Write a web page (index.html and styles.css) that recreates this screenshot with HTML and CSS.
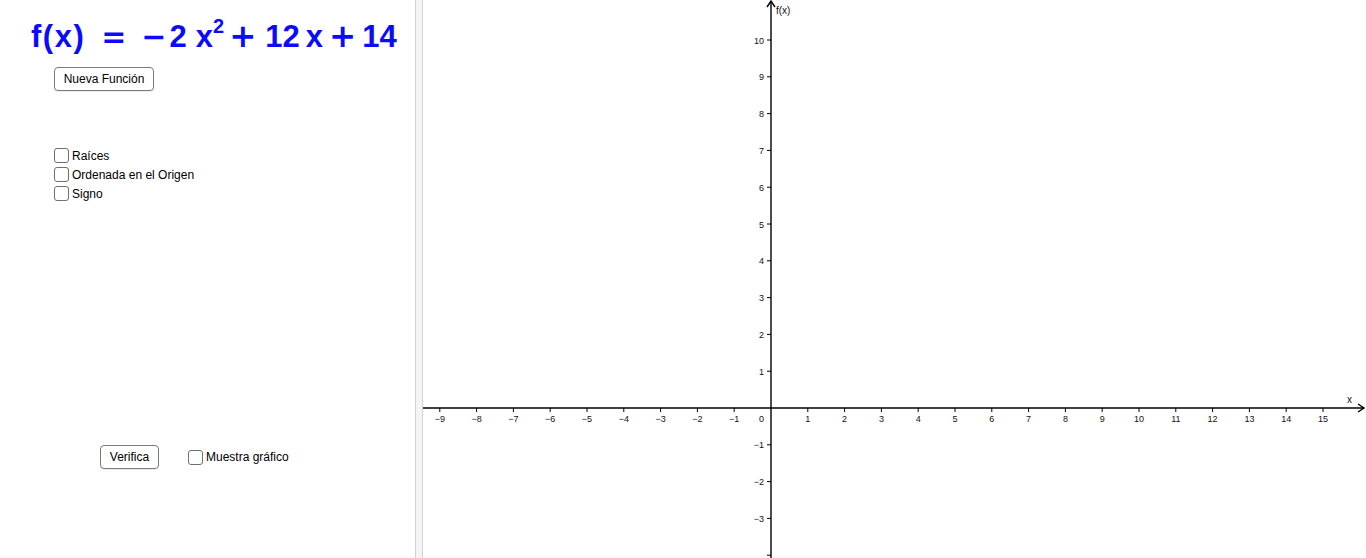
FILE: index.html
```html
<!DOCTYPE html>
<html lang="es">
<head>
<meta charset="utf-8">
<title>Función cuadrática</title>
<link rel="stylesheet" href="styles.css">
</head>
<body>
<div class="app">
  <div class="panel">
    <div class="formula">
      <span class="t t-fx">f(x)</span>
      <span class="t op t-eq">=</span>
      <span class="t op t-minus">−</span>
      <span class="t t-2">2</span>
      <span class="t t-x1">x<sup class="sup">2</sup></span>
      <span class="t op plus t-plus1">+</span>
      <span class="t t-12">12</span>
      <span class="t t-x2">x</span>
      <span class="t op plus t-plus2">+</span>
      <span class="t t-14">14</span>
    </div>
    <button class="btn btn-nueva">Nueva Función</button>
    <div class="checks">
      <label class="check"><span class="box"></span>Raíces</label>
      <label class="check"><span class="box"></span>Ordenada en el Origen</label>
      <label class="check"><span class="box"></span>Signo</label>
    </div>
    <div class="verify-row">
      <button class="btn btn-verifica">Verifica</button>
      <label class="check"><span class="box"></span>Muestra gráfico</label>
    </div>
  </div>
  <div class="divider"></div>
  <div class="graph">
    <svg class="plane" width="943" height="558" viewBox="0 0 943 558" xmlns="http://www.w3.org/2000/svg">
      <g class="axes" stroke="#000" stroke-width="1.4" fill="none">
        <line x1="0" y1="408" x2="941" y2="408"/>
        <polyline points="935,404 941,408 935,412"/>
        <line x1="348" y1="558" x2="348" y2="1"/>
        <polyline points="344,7 348,1 352,7"/>
      </g>
      <g class="ticks" stroke="#000" stroke-width="1">
        <line x1="16.8" y1="408" x2="16.8" y2="412"/>
        <line x1="53.6" y1="408" x2="53.6" y2="412"/>
        <line x1="90.4" y1="408" x2="90.4" y2="412"/>
        <line x1="127.2" y1="408" x2="127.2" y2="412"/>
        <line x1="164" y1="408" x2="164" y2="412"/>
        <line x1="200.8" y1="408" x2="200.8" y2="412"/>
        <line x1="237.6" y1="408" x2="237.6" y2="412"/>
        <line x1="274.4" y1="408" x2="274.4" y2="412"/>
        <line x1="311.2" y1="408" x2="311.2" y2="412"/>
        <line x1="384.8" y1="408" x2="384.8" y2="412"/>
        <line x1="421.6" y1="408" x2="421.6" y2="412"/>
        <line x1="458.4" y1="408" x2="458.4" y2="412"/>
        <line x1="495.2" y1="408" x2="495.2" y2="412"/>
        <line x1="532" y1="408" x2="532" y2="412"/>
        <line x1="568.8" y1="408" x2="568.8" y2="412"/>
        <line x1="605.6" y1="408" x2="605.6" y2="412"/>
        <line x1="642.4" y1="408" x2="642.4" y2="412"/>
        <line x1="679.2" y1="408" x2="679.2" y2="412"/>
        <line x1="716" y1="408" x2="716" y2="412"/>
        <line x1="752.8" y1="408" x2="752.8" y2="412"/>
        <line x1="789.6" y1="408" x2="789.6" y2="412"/>
        <line x1="826.4" y1="408" x2="826.4" y2="412"/>
        <line x1="863.2" y1="408" x2="863.2" y2="412"/>
        <line x1="900" y1="408" x2="900" y2="412"/>
        <line x1="344" y1="40" x2="348" y2="40"/>
        <line x1="344" y1="76.8" x2="348" y2="76.8"/>
        <line x1="344" y1="113.6" x2="348" y2="113.6"/>
        <line x1="344" y1="150.4" x2="348" y2="150.4"/>
        <line x1="344" y1="187.2" x2="348" y2="187.2"/>
        <line x1="344" y1="224" x2="348" y2="224"/>
        <line x1="344" y1="260.8" x2="348" y2="260.8"/>
        <line x1="344" y1="297.6" x2="348" y2="297.6"/>
        <line x1="344" y1="334.4" x2="348" y2="334.4"/>
        <line x1="344" y1="371.2" x2="348" y2="371.2"/>
        <line x1="344" y1="444.8" x2="348" y2="444.8"/>
        <line x1="344" y1="481.6" x2="348" y2="481.6"/>
        <line x1="344" y1="518.4" x2="348" y2="518.4"/>
        <line x1="344" y1="555.2" x2="348" y2="555.2"/>
      </g>
      <g class="xlabels" text-anchor="middle">
        <text x="16.8" y="422">−9</text>
        <text x="53.6" y="422">−8</text>
        <text x="90.4" y="422">−7</text>
        <text x="127.2" y="422">−6</text>
        <text x="164" y="422">−5</text>
        <text x="200.8" y="422">−4</text>
        <text x="237.6" y="422">−3</text>
        <text x="274.4" y="422">−2</text>
        <text x="311.2" y="422">−1</text>
        <text x="384.8" y="422">1</text>
        <text x="421.6" y="422">2</text>
        <text x="458.4" y="422">3</text>
        <text x="495.2" y="422">4</text>
        <text x="532" y="422">5</text>
        <text x="568.8" y="422">6</text>
        <text x="605.6" y="422">7</text>
        <text x="642.4" y="422">8</text>
        <text x="679.2" y="422">9</text>
        <text x="716" y="422">10</text>
        <text x="752.8" y="422">11</text>
        <text x="789.6" y="422">12</text>
        <text x="826.4" y="422">13</text>
        <text x="863.2" y="422">14</text>
        <text x="900" y="422">15</text>
      </g>
      <g class="ylabels" text-anchor="end">
        <text x="341" y="422">0</text>
        <text x="341" y="43.5">10</text>
        <text x="341" y="80.3">9</text>
        <text x="341" y="117.1">8</text>
        <text x="341" y="153.9">7</text>
        <text x="341" y="190.7">6</text>
        <text x="341" y="227.5">5</text>
        <text x="341" y="264.3">4</text>
        <text x="341" y="301.1">3</text>
        <text x="341" y="337.9">2</text>
        <text x="341" y="374.7">1</text>
        <text x="341" y="448.3">−1</text>
        <text x="341" y="485.1">−2</text>
        <text x="341" y="521.9">−3</text>
      </g>
      <g class="axis-names">
        <text x="353" y="14">f(x)</text>
        <text x="924" y="403">x</text>
      </g>
    </svg>
  </div>
</div>
</body>
</html>
```

FILE: styles.css
```css
* { box-sizing: border-box; }
html, body { margin: 0; padding: 0; background: #fff; }
body { font-family: "Liberation Sans", Arial, sans-serif; color: #000; overflow: hidden; }

.app { display: flex; width: 1366px; height: 558px; }

.panel { width: 415px; flex: none; }

.formula {
  display: flex;
  align-items: baseline;
  height: 56px;
  padding-left: 31px;
  padding-top: 18px;
  font-family: "Liberation Sans", Arial, sans-serif;
  font-weight: bold;
  font-size: 31px;
  line-height: 36px;
  color: #0a0aff;
  white-space: nowrap;
}
.t { display: inline-block; }
.t-fx { letter-spacing: 1.5px; }
.op { font-family: "DejaVu Sans", sans-serif; font-weight: bold; font-size: 30px; }
.plus { font-size: 32.5px; }
.t-eq { margin-left: 16px; }
.t-minus { margin-left: 15px; }
.t-2 { margin-left: 3px; }
.t-x1 { margin-left: 9px; }
.sup { font-size: 20px; vertical-align: 0; position: relative; top: -14px; }
.t-plus1 { margin-left: 5px; }
.t-12 { margin-left: 9px; }
.t-x2 { margin-left: 6px; }
.t-plus2 { margin-left: 6px; }
.t-14 { margin-left: 6px; }

.btn {
  display: block;
  font-family: "Liberation Sans", Arial, sans-serif;
  font-size: 12px;
  color: #000;
  background: #fff;
  border: 1px solid #7a7a7a;
  border-radius: 4px;
  height: 24px;
  padding: 0;
  line-height: 22px;
  text-align: center;
  white-space: nowrap;
  box-shadow: 0 1px 1px rgba(0,0,0,0.08);
}
.btn-nueva { margin-left: 54px; margin-top: 11px; width: 100px; }

.checks { margin-left: 54px; margin-top: 55px; display: flex; flex-direction: column; }
.check {
  display: flex;
  align-items: center;
  height: 19px;
  font-size: 12px;
  color: #000;
  white-space: nowrap;
}
.box {
  width: 15px;
  height: 15px;
  border: 1px solid #6f6f6f;
  border-radius: 3px;
  background: #fff;
  margin-right: 3px;
  flex: none;
}

.verify-row {
  display: flex;
  align-items: center;
  margin-top: 242px;
  margin-left: 100px;
  height: 24px;
}
.btn-verifica { width: 59px; margin-right: 29px; }

.divider {
  width: 8px;
  flex: none;
  background: #f4f4f4;
  border-left: 1px solid #d2d2d2;
  border-right: 1px solid #d2d2d2;
}

.graph { flex: 1; overflow: hidden; }
.plane { display: block; }
.plane text {
  font-family: "Liberation Sans", Arial, sans-serif;
  font-size: 9px;
  fill: #111;
}
.axis-names text { font-size: 10px; }
```
